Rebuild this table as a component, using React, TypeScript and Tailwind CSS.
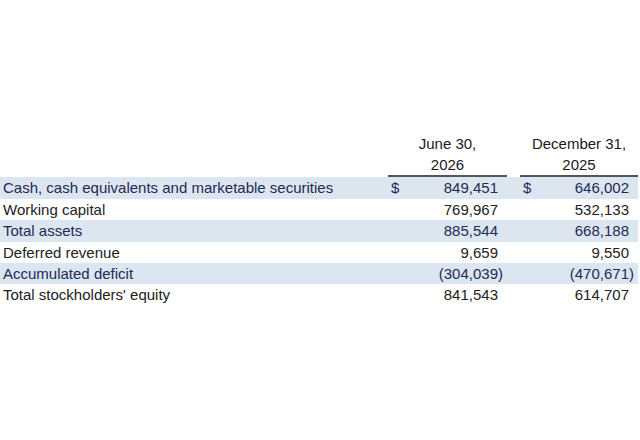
const rows = [
  { label: "Cash, cash equivalents and marketable securities", a: "849,451", b: "646,002", dollar: true, band: true },
  { label: "Working capital", a: "769,967", b: "532,133", band: false },
  { label: "Total assets", a: "885,544", b: "668,188", band: true },
  { label: "Deferred revenue", a: "9,659", b: "9,550", band: false },
  { label: "Accumulated deficit", a: "(304,039)", b: "(470,671)", band: true },
  { label: "Total stockholders' equity", a: "841,543", b: "614,707", band: false },
];

function Amount({ value, dollar }: { value: string; dollar?: boolean }) {
  const neg = value.startsWith("(");
  return (
    <div className="flex items-center justify-between pl-[3px] pr-[4px]">
      <span>{dollar ? "$" : ""}</span>
      <span className={neg ? "" : "pr-[5px]"}>{value}</span>
    </div>
  );
}

export default function App() {
  return (
    <div className="w-[640px] h-[440px] bg-white font-['Liberation_Sans',sans-serif] text-[15px] text-[#1a1a1a]">
      <div className="pt-[133px] grid grid-cols-[388px_119px_13px_118px] leading-[21.2px]">
        <div />
        <div className="text-center">June 30,</div>
        <div />
        <div className="text-center">December 31,</div>
        <div />
        <div className="text-center border-b-2 border-[#555]">2026</div>
        <div />
        <div className="text-center border-b-2 border-[#555]">2025</div>
      </div>
      <div className="flex flex-col w-[638px]">
        {rows.map((r) => (
          <div
            key={r.label}
            className={`grid grid-cols-[388px_119px_13px_118px] h-[21.4px] items-center ${r.band ? "bg-[#dce6f1] text-[#1f2a55]" : "text-[#222]"}`}
          >
            <div className="pl-[3px] whitespace-nowrap">{r.label}</div>
            <Amount value={r.a} dollar={r.dollar} />
            <div />
            <Amount value={r.b} dollar={r.dollar} />
          </div>
        ))}
      </div>
    </div>
  );
}
